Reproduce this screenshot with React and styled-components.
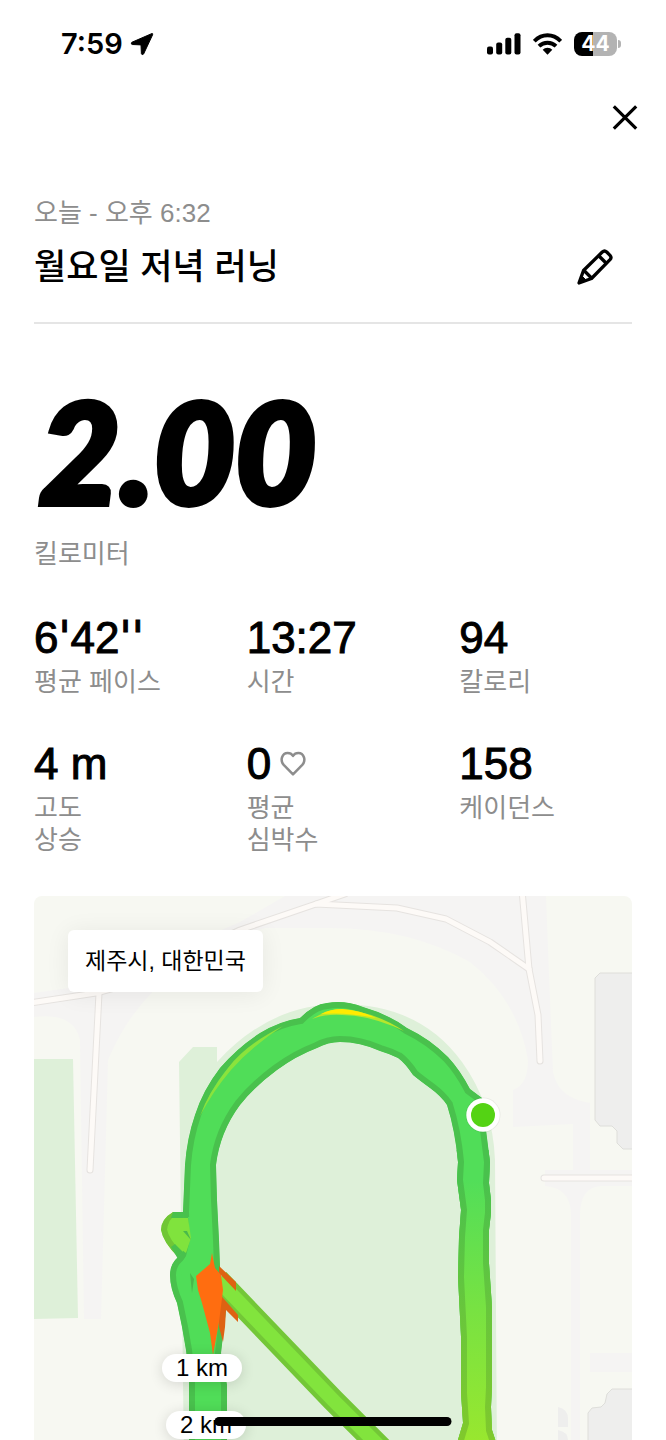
import React from "react"

import styled, { createGlobalStyle } from "styled-components"

const GlobalStyle = createGlobalStyle`
  :root {
    --black: #000000;
    --white: #ffffff;
    --gray: #8d8d8d;
    --gray-thin: #e5e5e5;
    --map: #f7f8f2;
  }

  * {
    box-sizing: border-box;
  }

  body {
    margin: 0;
    background: var(--white);
    color: var(--black);
    font-family: "Liberation Sans", "Noto Sans CJK KR", sans-serif;
  }
`

const Screen = styled.div`
  display: flex;
  flex-direction: column;
  height: 100vh;
  overflow: hidden;
`

const StatusBar = styled.div`
  display: flex;
  flex: none;
  align-items: center;
  justify-content: space-between;
  height: 88px;
  padding: 0 45px 0 61px;
`

const StatusGroup = styled.div`
  display: flex;
  align-items: center;
  gap: ${props => props.$gap}px;
`

const Clock = styled.time`
  font-family: Inter, sans-serif;
  font-size: 29px;
  font-weight: 600;
  line-height: 32px;
`

const Battery = styled.div`
  display: flex;
  align-items: center;
  gap: 1px;

  .body {
    width: 43px;
    height: 24px;
    border-radius: 8px;
    background: linear-gradient(to right, var(--black) 44%, #b3b3b3 44%);
    color: var(--white);
    font-family: Inter, sans-serif;
    font-size: 21px;
    font-weight: 700;
    line-height: 24px;
    text-align: center;
  }

  .tip {
    width: 3px;
    height: 8px;
    border-radius: 0 4px 4px 0;
    background: #b3b3b3;
  }
`

const Header = styled.header`
  display: flex;
  flex: none;
  justify-content: flex-end;
  height: 109px;
  padding: 10px 21px;
`

const IconButton = styled.button`
  display: flex;
  align-items: center;
  justify-content: center;
  width: 40px;
  height: 40px;
  padding: 0;
  border: none;
  background: none;
  color: inherit;
  cursor: pointer;
`

const Main = styled.main`
  display: flex;
  flex: 1;
  flex-direction: column;
  min-height: 0;
  padding: 0 34px;
`

const Label = styled.div`
  color: var(--gray);
  font-size: 26px;
  line-height: 32px;
`

const Title = styled.div`
  display: flex;
  align-items: center;
  justify-content: space-between;
  height: 95px;
  margin-bottom: 60px;
  padding: 0 17px 18px 0;
  border-bottom: 2px solid var(--gray-thin);

  h1 {
    margin: 0;
    font-size: 35px;
    font-weight: 500;
    line-height: 48px;
  }
`

const Distance = styled.div`
  margin-bottom: 40px;

  .number {
    margin-bottom: 22px;
    padding-left: 5px;
    font-family: Lato, sans-serif;
    font-size: 140px;
    font-style: italic;
    font-weight: 900;
    line-height: 132px;
    -webkit-text-stroke: 6px var(--black);
  }
`

const Stats = styled.dl`
  display: grid;
  grid-template-columns: repeat(3, 1fr);
  gap: 38px 40px;
  margin: 0 0 40px;
`

const Stat = styled.div`
  display: flex;
  flex-direction: column-reverse;
  justify-content: flex-end;

  dd {
    display: flex;
    align-items: center;
    gap: 9px;
    margin: 0;
    font-size: 44px;
    line-height: 56px;
    -webkit-text-stroke: 1px var(--black);
  }
`

const Prime = styled.span`
  font-family: "DejaVu Sans", sans-serif;
`

const MapPanel = styled.section`
  position: relative;
  flex: 1;
  min-height: 0;
  border-radius: 8px 8px 0 0;
  background: var(--map);
  overflow: hidden;

  > svg {
    display: block;
    width: 100%;
    height: 100%;
  }
`

const Place = styled.div`
  position: absolute;
  top: 34px;
  left: 34px;
  padding: 15px 17px;
  border-radius: 6px;
  background: var(--white);
  box-shadow: 0 2px 24px rgba(0, 0, 0, 0.07);
  font-size: 23px;
  line-height: 32px;
`

const Pin = styled.div`
  position: absolute;
  top: ${props => props.$y}px;
  left: ${props => props.$x}px;
  width: 80px;
  border-radius: 14px;
  background: var(--white);
  box-shadow: 0 2px 14px rgba(0, 0, 0, 0.14);
  font-size: 24px;
  line-height: 28px;
  text-align: center;
`

const HomeIndicator = styled.div`
  position: fixed;
  bottom: 14px;
  left: 50%;
  width: 237px;
  height: 9px;
  border-radius: 5px;
  background: var(--black);
  transform: translateX(-50%);
`

const LocationIcon = () => (
    <svg width="24" height="24" viewBox="0 0 24 24" aria-hidden="true">
        <path
            d="M22 1.500L1.800 10.300Q0.500 12.200 2.300 12.500L11 12.900L11.400 21.700Q12 23.500 13.600 22L22.600 2.800Q23 1.300 22 1.500Z"
            stroke="#000"
            strokeLinejoin="round"
        />
    </svg>
)

const SignalIcon = () => (
    <svg width="34" height="22" viewBox="0 0 34 22" aria-hidden="true">
        <rect x="0" y="13.500" width="6" height="8" rx="2" />
        <rect x="9.200" y="9.500" width="6" height="12" rx="2" />
        <rect x="18.300" y="4.800" width="6" height="16.700" rx="2" />
        <rect x="27.500" y="0.300" width="6" height="21.200" rx="2" />
    </svg>
)

const WifiIcon = () => (
    <svg width="29" height="22" viewBox="0 0 29 22" aria-hidden="true">
        <g fill="none" stroke="#000" strokeWidth="3.900">
            <path d="M1.300 8.200Q7.200 2.300 14.500 2.300T27.700 8.200" />
            <path d="M6 13.200Q9.700 9.700 14.500 9.700T23 13.200" />
        </g>
        <path d="M14.500 14.800Q17.500 14.800 19.300 16.700L14.500 21.700L9.700 16.700Q11.500 14.800 14.500 14.800Z" />
    </svg>
)

const CloseIcon = () => (
    <svg width="26" height="26" viewBox="0 0 26 26" aria-hidden="true">
        <path d="M1.800 1.300L24.200 23.700M24.200 1.300L1.800 23.700" stroke="#000" strokeWidth="3.200" />
    </svg>
)

const PencilIcon = () => (
    <svg
        width="36"
        height="36"
        viewBox="0 0 36 36"
        fill="none"
        stroke="#000"
        strokeWidth="3.300"
        strokeLinejoin="round"
        aria-hidden="true"
    >
        <path d="M2 34L6.500 21.500L25.300 3Q27.500 1 29.700 3L33 6.300Q35 8.500 33 10.700L14.500 29.500L2 34Z" />
        <path d="M21.500 6.500L29.500 14.500M7 21.500L14.500 29" />
        <path d="M1.500 34.500L4.500 26.500L9.500 31.500Z" fill="#000" strokeWidth="1" />
    </svg>
)

const HeartIcon = () => (
    <svg width="26" height="26" viewBox="0 0 26 26" aria-hidden="true">
        <path
            d="M13 23.300L3.700 13.900C-0.300 9.400 2 2 7.700 2C10.200 2 11.800 3 13 4.900C14.200 3 15.800 2 18.300 2C24 2 26.300 9.400 22.300 13.900Z"
            fill="none"
            stroke="#8d8d8d"
            strokeWidth="2.500"
            strokeLinejoin="round"
        />
    </svg>
)

const ROADS = [
    "M30 1003L96 993L118 987L240 930L316 904L397 908L446 919L490 942L529 969",
    "M316 904L345 894",
    "M522 890L529 969L538 1015L540 1061",
    "M99 993L90 1170",
    "M544 1178H640",
]

const ROUTE =
    "M189 1460V1375L186 1350L182 1327L177 1303Q170 1288 170 1275Q170 1264 178 1257L184 1250L183 1212L185 1165Q187 1138 195 1115Q203 1090 220 1068Q238 1047 260 1033Q280 1021 300 1018Q314 1004 327 1003Q345 1000 363 1007Q388 1014 407 1028Q430 1039 448 1057Q460 1070 470 1089L482 1098L487 1138L490 1162L489 1183L491 1200V1213L489 1230V1263L492 1307V1387L491 1407L492 1430L502 1460H452L463 1423L461 1393V1337L458 1277L459 1237L461 1210L457 1180L458 1162Q455 1130 447 1105Q441 1096 430 1088Q419 1080 413 1075Q405 1063 398 1058Q390 1054 380 1051Q360 1042 340 1042Q328 1042 317 1048Q296 1056 277 1070Q254 1087 240 1105Q220 1132 216 1165L217 1200L219 1240L220 1267L226 1310L221 1353L227 1385V1460Z"

const LOOP = "M200 1212H173Q161 1219 161 1230Q163 1242 178 1257L200 1270Z"

const RunMap = () => (
    <svg viewBox="34 896 598 544" preserveAspectRatio="xMidYMin slice" aria-hidden="true">
        <defs>
            <clipPath id="route">
                <path d={ROUTE} />
            </clipPath>
            <clipPath id="loop">
                <path d={LOOP} />
            </clipPath>
            <clipPath id="right">
                <rect x="400" y="1150" width="150" height="320" />
            </clipPath>
            <linearGradient id="pace" gradientUnits="userSpaceOnUse" x1="0" y1="1180" x2="0" y2="1440">
                <stop offset="0" stopColor="#52de59" />
                <stop offset="0.500" stopColor="#78e242" />
                <stop offset="1" stopColor="#98e72f" />
            </linearGradient>
            <linearGradient id="pace-edge" gradientUnits="userSpaceOnUse" x1="0" y1="1180" x2="0" y2="1440">
                <stop offset="0" stopColor="#49c14d" />
                <stop offset="0.500" stopColor="#68c63c" />
                <stop offset="1" stopColor="#80c92c" />
            </linearGradient>
        </defs>

        {/* ground */}
        <g fill="#f5f4f3">
            <path d="M34 993L96 984L240 922L285 896H546L549 975L553 1072Q558 1098 590 1103V1170H632V1186H600Q580 1188 580 1215V1460H571V1215Q571 1188 545 1186V1170H573V1124L513 1127V1090Q528 1085 528 1060Q518 1000 470 962Q410 928 330 928H265Q150 960 108 1060L101 1319H84L80 1040Q74 1012 34 1017Z" />
            <rect x="590" y="1353" width="42" height="19" />
        </g>
        <g fill="#def0d9">
            <path d="M34 1059H73L78 1318L34 1319Z" />
            <path d="M179 1062L193 1047H217V1062Q270 1004 340 1004Q420 1004 462 1062Q493 1105 495 1160L497 1460H184Z" />
        </g>
        <g fill="#eeeeed" stroke="#dededa">
            <path d="M640 973H600L595 978V1120L600 1126H612L617 1131V1143L623 1149H640Z" />
            <path d="M640 1389H612L607 1394L605 1403L601 1407L592 1408L588 1413V1460H640Z" />
        </g>
        <path d="M558 1407Q568 1409 568 1419V1427H558ZM558 1430Q568 1432 568 1440H558Z" fill="#eeeeed" />

        <g fill="none" strokeLinejoin="round" strokeLinecap="round">
            {ROADS.map(d => (
                <path key={d} d={d} stroke="#e6e3e0" strokeWidth="7" />
            ))}
            {ROADS.map(d => (
                <path key={d} d={d} stroke="#fdfaf7" strokeWidth="5" />
            ))}
        </g>

        {/* run */}
        <path d={LOOP} fill="#80e33d" stroke="#70c636" strokeWidth="12" clipPath="url(#loop)" />
        <path d="M173 1212H190V1218H171ZM171 1247L175 1244L186 1255L178 1259Z" fill="#49c14d" />
        <path d={ROUTE} fill="#50dd58" stroke="#49c14d" strokeWidth="12" clipPath="url(#route)" />
        <g clipPath="url(#right)">
            <path d={ROUTE} fill="url(#pace)" stroke="url(#pace-edge)" strokeWidth="12" clipPath="url(#route)" />
        </g>
        <path d="M188 1217H198V1276H182L180 1266L186 1256L190 1240Z" fill="#50dd58" />
        <path d="M172 1218H188L191 1238L186 1253Q181 1250 170 1236Q165 1224 172 1218Z" fill="#80e33d" />
        <path d="M183 1231H187L191 1240ZM190 1273L194 1279L192 1293Z" fill="#49b94b" />
        <path d="M283 1026Q245 1045 228 1068Q208 1093 200 1116Q213 1091 231 1070Q252 1046 283 1026Z" fill="#8ae33c" />
        <path d="M312 1019Q328 1009 342 1009Q375 1012 404 1031Q370 1015 342 1015Q325 1014 312 1019Z" fill="#b6e62c" />
        <path d="M321 1014Q330 1009 342 1009Q360 1010 376 1018Q345 1012 321 1014Z" fill="#ffeb00" />
        <path d="M218 1280L333 1400L390 1457" fill="none" stroke="#73c737" strokeWidth="23" />
        <path d="M218 1280L333 1400L390 1457" fill="none" stroke="#82e43d" strokeWidth="14" />
        <path d="M219 1266L236 1282V1291L219 1273ZM217 1291L238 1315V1322L226 1310L225 1327L223 1342L219 1327Z" fill="#de6212" />
        <path d="M212 1253L210 1264L196 1276L198 1290L202 1303L210 1333L213 1355L219 1322L223 1290L221 1275L215 1268Z" fill="#ff6d10" />
        <circle cx="483" cy="1115" r="17.500" fill="#000" opacity="0.060" />
        <circle cx="483" cy="1115" r="16.700" fill="#fff" />
        <circle cx="483" cy="1115" r="12" fill="#54d314" />
    </svg>
)

const Pace = ({ minutes, seconds }) => (
    <span>
        {minutes}
        <Prime>'</Prime>
        {seconds}
        <Prime>''</Prime>
    </span>
)

const STATS = [
    { id: "pace", value: <Pace minutes="6" seconds="42" />, label: ["평균 페이스"] },
    { id: "time", value: "13:27", label: ["시간"] },
    { id: "calories", value: "94", label: ["칼로리"] },
    { id: "elevation", value: "4 m", label: ["고도", "상승"] },
    { id: "heart", value: "0", label: ["평균", "심박수"], icon: <HeartIcon /> },
    { id: "cadence", value: "158", label: ["케이던스"] },
]

const App = () => {
    return (
        <Screen>
            <GlobalStyle />
            <StatusBar>
                <StatusGroup $gap={7}>
                    <Clock>7:59</Clock>
                    <LocationIcon />
                </StatusGroup>
                <StatusGroup $gap={12}>
                    <SignalIcon />
                    <WifiIcon />
                    <Battery>
                        <div className="body">44</div>
                        <div className="tip" />
                    </Battery>
                </StatusGroup>
            </StatusBar>
            <Header>
                <IconButton aria-label="닫기">
                    <CloseIcon />
                </IconButton>
            </Header>
            <Main>
                <Label>오늘 - 오후 6:32</Label>
                <Title>
                    <h1>월요일 저녁 러닝</h1>
                    <IconButton aria-label="이름 편집">
                        <PencilIcon />
                    </IconButton>
                </Title>
                <Distance>
                    <div className="number">2.00</div>
                    <Label>킬로미터</Label>
                </Distance>
                <Stats>
                    {STATS.map(({ id, value, label, icon }) => (
                        <Stat key={id}>
                            <Label as="dt">
                                {label.map(line => (
                                    <div key={line}>{line}</div>
                                ))}
                            </Label>
                            <dd>
                                {value}
                                {icon}
                            </dd>
                        </Stat>
                    ))}
                </Stats>
                <MapPanel>
                    <RunMap />
                    <Place>제주시, 대한민국</Place>
                    <Pin $x={128} $y={458}>1 km</Pin>
                    <Pin $x={132} $y={515}>2 km</Pin>
                </MapPanel>
            </Main>
            <HomeIndicator />
        </Screen>
    )
}

export default App
